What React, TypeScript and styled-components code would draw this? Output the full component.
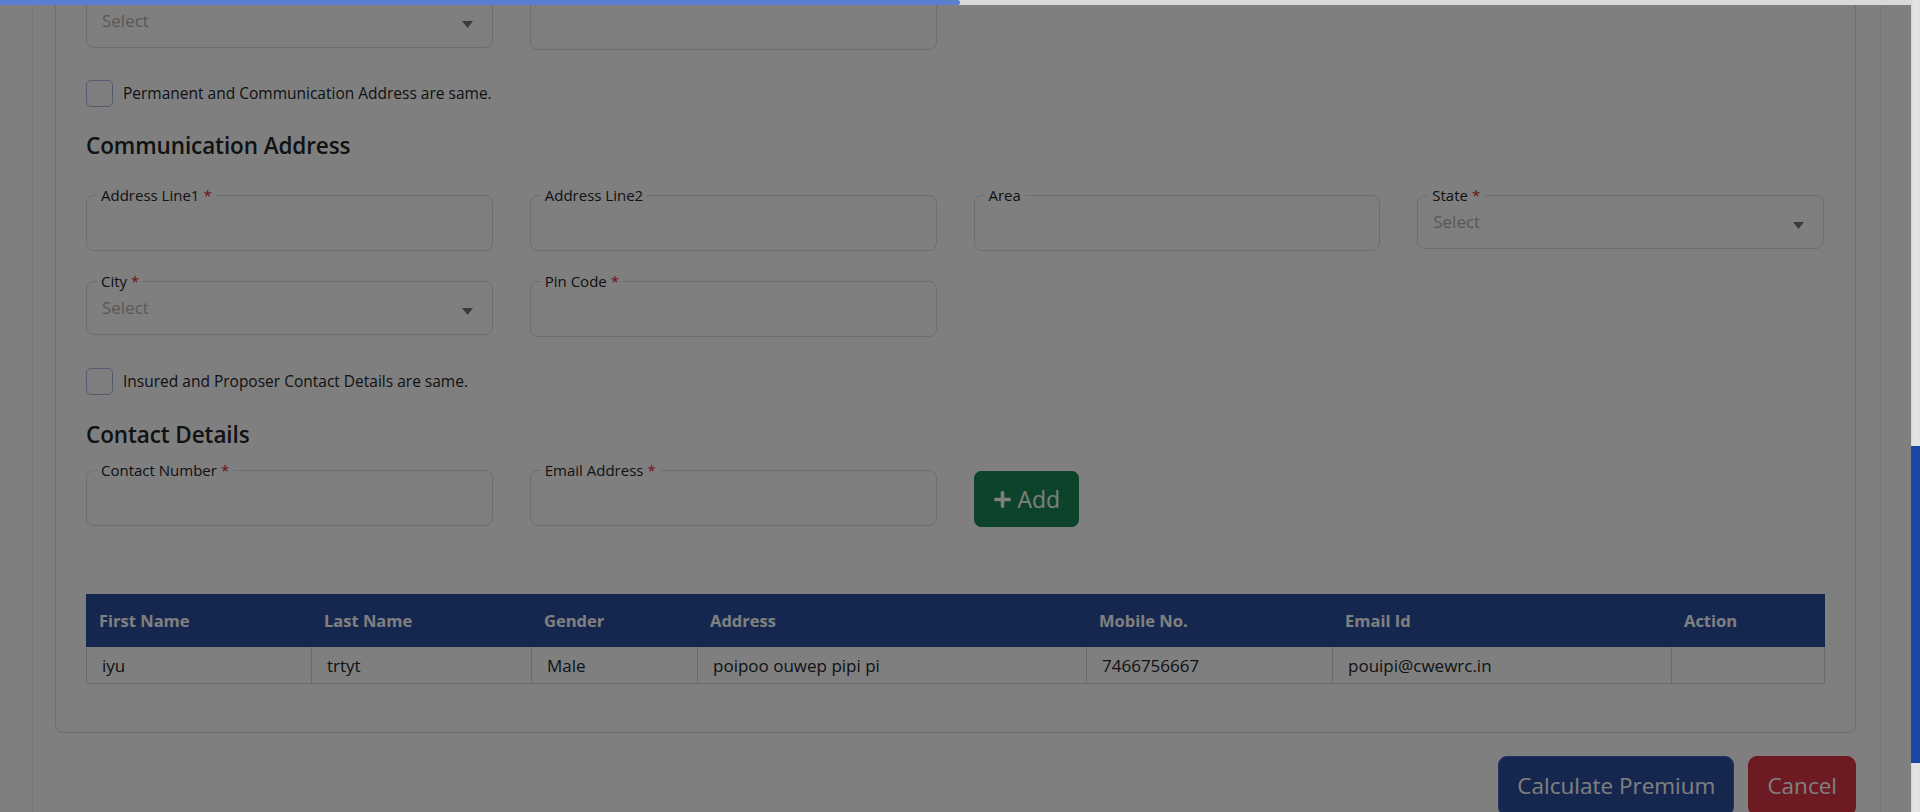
import React from "react";
import styled, { createGlobalStyle } from "styled-components";
import { FaPlus } from "react-icons/fa";

const GlobalStyle = createGlobalStyle`
  html, body {
    margin: 0;
    padding: 0;
    height: 100%;
    overflow: hidden;
    background: #ffffff;
  }
  body {
    font-family: "Open Sans", "Noto Sans", sans-serif;
    color: #212529;
  }
  *, *::before, *::after { box-sizing: border-box; }
`;

const Viewport = styled.div`
  width: 1911px;
  height: 812px;
  overflow: hidden;
  background: #ffffff;
`;

const Shell = styled.main`
  display: flex;
  flex-direction: column;
  margin-left: 32px;
  width: 1849px;
  height: 812px;
  padding: 0 24px 0 22px;
  border-left: 1px solid #ededed;
  border-right: 1px solid #ededed;
  & > * { flex-shrink: 0; }
`;

const Card = styled.section`
  margin-top: -181px;
  border: 1px solid #dcdcdc;
  border-radius: 8px;
  padding: 24px 31px 48px 30px;
`;

const SectionTitle = styled.h3<{ $mt?: number; $mb: number }>`
  margin: ${(p) => p.$mt ?? 0}px 0 ${(p) => p.$mb}px;
  font-size: 22.5px;
  line-height: 30px;
  font-weight: 600;
  letter-spacing: -0.1px;
  color: #212529;
`;

const FieldGrid = styled.div`
  display: grid;
  grid-template-columns: repeat(4, minmax(0, 1fr));
  column-gap: 37px;
  row-gap: 21px;
  align-items: start;
`;

const Field = styled.fieldset`
  margin: 0;
  min-width: 0;
  padding: 0 10px;
  border: 1px solid #dcdcdc;
  border-radius: 8px;
`;

const Legend = styled.legend`
  padding: 0 4px;
  font-size: 15px;
  line-height: 19px;
  color: #212529;
`;

const Required = styled.span`
  color: #dc1f36;
  margin-left: 4px;
`;

const TextInput = styled.input`
  display: block;
  width: 100%;
  height: 45px;
  border: none;
  outline: none;
  background: transparent;
  padding: 0 5px;
  font-family: inherit;
  font-size: 17px;
  color: #212529;
`;

const SelectBox = styled.div`
  display: flex;
  align-items: flex-start;
  justify-content: space-between;
  height: 43px;
  padding: 5px 9px 0 5px;
`;

const Placeholder = styled.span`
  font-size: 17px;
  line-height: 24px;
  color: #b0b0b0;
`;

const Caret = styled.svg`
  margin-top: 12px;
  width: 11px;
  height: 7px;
  fill: #767676;
`;

const CheckRow = styled.label<{ $mt: number }>`
  display: flex;
  align-items: center;
  gap: 10px;
  margin-top: ${(p) => p.$mt}px;
  height: 26px;
  font-size: 15.5px;
  color: #212529;
`;

const CheckBox = styled.input`
  appearance: none;
  margin: 0;
  width: 27px;
  height: 27px;
  border: 1px solid #a7b8dc;
  border-radius: 5px;
  background: #ffffff;
`;

const AddButton = styled.button`
  justify-self: start;
  display: inline-flex;
  align-items: center;
  gap: 6px;
  margin-top: 10px;
  padding: 9px 18px;
  border: 1px solid #198754;
  border-radius: 7px;
  background: #198754;
  color: #ffffff;
  font-family: inherit;
  font-size: 23px;
  line-height: 36px;
  svg { width: 19px; height: 19px; }
`;

const Table = styled.table`
  width: 100%;
  margin-top: 67px;
  border-collapse: collapse;
  table-layout: fixed;
`;

const Col = styled.col<{ $w: number }>`
  width: ${(p) => p.$w}px;
`;

const Th = styled.th`
  height: 52px;
  padding: 0 12px;
  background: #2c4f9e;
  color: #ffffff;
  font-size: 16.5px;
  font-weight: 700;
  text-align: left;
  border: 1px solid #2c4f9e;
  border-left-color: #dfe3ea;
  &:first-child { border-left-color: #2c4f9e; }
`;

const Td = styled.td`
  height: 37px;
  padding: 0 15px;
  font-size: 17px;
  color: #212529;
  border: 1px solid #d6d6d6;
`;

const Actions = styled.div`
  display: flex;
  justify-content: flex-end;
  gap: 14px;
  margin-top: 23px;
`;

const ActionButton = styled.button<{ $tone: "primary" | "danger" }>`
  padding: 11px 18px;
  border-radius: 9px;
  border: 1px solid ${(p) => (p.$tone === "primary" ? "#3a66c8" : "#dc3545")};
  background: ${(p) => (p.$tone === "primary" ? "#2c4f9e" : "#dc3545")};
  color: #ffffff;
  font-family: inherit;
  font-size: 22.5px;
  line-height: 36px;
`;

const Backdrop = styled.div`
  position: fixed;
  top: 0;
  left: 0;
  width: 1911px;
  height: 812px;
  background: rgba(0, 0, 0, 0.5);
  z-index: 10;
`;

const ProgressTrack = styled.div`
  position: fixed;
  top: 0;
  left: 0;
  width: 1911px;
  height: 5px;
  background: #d9d9d9;
  z-index: 20;
`;

const ProgressFill = styled.div`
  height: 100%;
  background: #5b7fcf;
  border-radius: 0 3px 3px 0;
`;

const ScrollTrack = styled.div`
  position: fixed;
  top: 0;
  right: 0;
  width: 9px;
  height: 812px;
  background: linear-gradient(90deg, #d2d2d2 0, #e4e4e4 2px, #e0e0e0 100%);
  z-index: 20;
`;

const ScrollThumb = styled.div`
  margin-top: 446px;
  height: 317px;
  background: #1a47a5;
`;

type FieldDef = { label: string; required?: boolean; select?: boolean };

const FormField: React.FC<FieldDef> = ({ label, required, select }) => (
  <Field>
    <Legend>
      {label}
      {required && <Required>*</Required>}
    </Legend>
    {select ? (
      <SelectBox>
        <Placeholder>Select</Placeholder>
        <Caret viewBox="0 0 11 7">
          <polygon points="0,0 11,0 5.5,7" />
        </Caret>
      </SelectBox>
    ) : (
      <TextInput type="text" />
    )}
  </Field>
);

const addressFields: FieldDef[] = [
  { label: "Address Line1", required: true },
  { label: "Address Line2" },
  { label: "Area" },
  { label: "State", required: true, select: true },
  { label: "City", required: true, select: true },
  { label: "Pin Code", required: true },
];

const columns = [
  { title: "First Name", w: 225 },
  { title: "Last Name", w: 220 },
  { title: "Gender", w: 166 },
  { title: "Address", w: 389 },
  { title: "Mobile No.", w: 246 },
  { title: "Email Id", w: 339 },
  { title: "Action", w: 153 },
];

const rows = [
  ["iyu", "trtyt", "Male", "poipoo ouwep pipi pi", "7466756667", "pouipi@cwewrc.in", ""],
];

export default function App() {
  return (
    <>
      <GlobalStyle />
      <Viewport>
        <Shell>
          <Card>
            <SectionTitle $mb={25}>Permanent Address</SectionTitle>
            <FieldGrid>
              {addressFields.map((f) => (
                <FormField key={"p" + f.label} {...f} />
              ))}
            </FieldGrid>

            <CheckRow $mt={30}>
              <CheckBox type="checkbox" />
              Permanent and Communication Address are same.
            </CheckRow>

            <SectionTitle $mt={25} $mb={25}>Communication Address</SectionTitle>
            <FieldGrid>
              {addressFields.map((f) => (
                <FormField key={"c" + f.label} {...f} />
              ))}
            </FieldGrid>

            <CheckRow $mt={31}>
              <CheckBox type="checkbox" />
              Insured and Proposer Contact Details are same.
            </CheckRow>

            <SectionTitle $mt={26} $mb={11}>Contact Details</SectionTitle>
            <FieldGrid>
              <FormField label="Contact Number" required />
              <FormField label="Email Address" required />
              <AddButton type="button">
                <FaPlus />
                Add
              </AddButton>
            </FieldGrid>

            <Table>
              <colgroup>
                {columns.map((c) => (
                  <Col key={c.title} $w={c.w} />
                ))}
              </colgroup>
              <thead>
                <tr>
                  {columns.map((c) => (
                    <Th key={c.title}>{c.title}</Th>
                  ))}
                </tr>
              </thead>
              <tbody>
                {rows.map((r, i) => (
                  <tr key={i}>
                    {r.map((cell, j) => (
                      <Td key={j}>{cell}</Td>
                    ))}
                  </tr>
                ))}
              </tbody>
            </Table>
          </Card>

          <Actions>
            <ActionButton type="button" $tone="primary">Calculate Premium</ActionButton>
            <ActionButton type="button" $tone="danger">Cancel</ActionButton>
          </Actions>
        </Shell>
      </Viewport>
      <Backdrop />
      <ProgressTrack>
        <ProgressFill style={{ width: "960px" }} />
      </ProgressTrack>
      <ScrollTrack>
        <ScrollThumb />
      </ScrollTrack>
    </>
  );
}
